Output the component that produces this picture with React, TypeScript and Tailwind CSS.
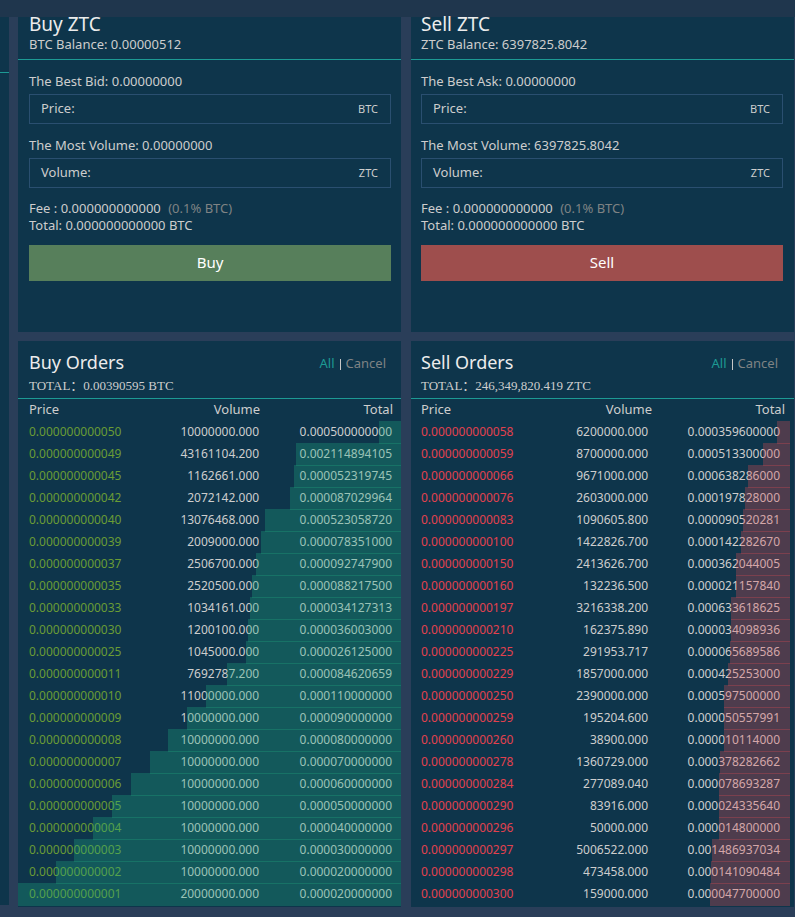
import React from "react";

type Row = [price: string, volume: string, total: string, depth: number];

const buyRows: Row[] = [
  ["0.000000000050", "10000000.000", "0.000500000000", 22],
  ["0.000000000049", "43161104.200", "0.002114894105", 105],
  ["0.000000000045", "1162661.000", "0.000052319745", 107],
  ["0.000000000042", "2072142.000", "0.000087029964", 111],
  ["0.000000000040", "13076468.000", "0.000523058720", 136],
  ["0.000000000039", "2009000.000", "0.000078351000", 140],
  ["0.000000000037", "2506700.000", "0.000092747900", 145],
  ["0.000000000035", "2520500.000", "0.000088217500", 149],
  ["0.000000000033", "1034161.000", "0.000034127313", 151],
  ["0.000000000030", "1200100.000", "0.000036003000", 153],
  ["0.000000000025", "1045000.000", "0.000026125000", 155],
  ["0.000000000011", "7692787.200", "0.000084620659", 174],
  ["0.000000000010", "11000000.000", "0.000110000000", 195],
  ["0.000000000009", "10000000.000", "0.000090000000", 214],
  ["0.000000000008", "10000000.000", "0.000080000000", 233],
  ["0.000000000007", "10000000.000", "0.000070000000", 251],
  ["0.000000000006", "10000000.000", "0.000060000000", 270],
  ["0.000000000005", "10000000.000", "0.000050000000", 289],
  ["0.000000000004", "10000000.000", "0.000040000000", 308],
  ["0.000000000003", "10000000.000", "0.000030000000", 327],
  ["0.000000000002", "10000000.000", "0.000020000000", 345],
  ["0.000000000001", "20000000.000", "0.000020000000", 383],
];

const sellRows: Row[] = [
  ["0.000000000058", "6200000.000", "0.000359600000", 13],
  ["0.000000000059", "8700000.000", "0.000513300000", 27],
  ["0.000000000066", "9671000.000", "0.000638286000", 42],
  ["0.000000000076", "2603000.000", "0.000197828000", 45],
  ["0.000000000083", "1090605.800", "0.000090520281", 47],
  ["0.000000000100", "1422826.700", "0.000142282670", 49],
  ["0.000000000150", "2413626.700", "0.000362044005", 54],
  ["0.000000000160", "132236.500", "0.000021157840", 54],
  ["0.000000000197", "3216338.200", "0.000633618625", 59],
  ["0.000000000210", "162375.890", "0.000034098936", 59],
  ["0.000000000225", "291953.717", "0.000065689586", 60],
  ["0.000000000229", "1857000.000", "0.000425253000", 62],
  ["0.000000000250", "2390000.000", "0.000597500000", 66],
  ["0.000000000259", "195204.600", "0.000050557991", 66],
  ["0.000000000260", "38900.000", "0.000010114000", 66],
  ["0.000000000278", "1360729.000", "0.000378282662", 70],
  ["0.000000000284", "277089.040", "0.000078693287", 71],
  ["0.000000000290", "83916.000", "0.000024335640", 71],
  ["0.000000000296", "50000.000", "0.000014800000", 71],
  ["0.000000000297", "5006522.000", "0.001486937034", 78],
  ["0.000000000298", "473458.000", "0.000141090484", 79],
  ["0.000000000300", "159000.000", "0.000047700000", 80],
];

// Depth values are expressed against this full-scale value.
const DEPTH_SCALE = 383;

function Field({ id, label, unit }: { id: string; label: string; unit: string }) {
  return (
    <div className="mt-[3px] flex h-[30px] items-center border border-[#2a4f70] pl-[11px] pr-3">
      <label htmlFor={id}>{label}</label>
      <input id={id} type="text" className="ml-2 min-w-0 flex-1 bg-transparent outline-none" />
      <span className="text-[11px]">{unit}</span>
    </div>
  );
}

type TradeProps = {
  side: "Buy" | "Sell";
  balance: string;
  best: string;
  most: string;
};

function TradePanel({ side, balance, best, most }: TradeProps) {
  const id = side.toLowerCase();
  const buy = side === "Buy";
  return (
    <section className="h-[315px] bg-[#0e354b]">
      <header className={"h-[43px] border-b border-[#1d9a94] " + (buy ? "px-[11px]" : "px-2.5")}>
        <h2 className="text-[19px] leading-[14px] text-[#ececec]">{side} ZTC</h2>
        <p className="mt-[3px] leading-5">{balance}</p>
      </header>
      <form
        className={"pt-[11px] " + (buy ? "pl-[11px] pr-2.5" : "pl-2.5 pr-[11px]")}
        onSubmit={(e) => e.preventDefault()}
      >
        <p className="leading-5">{best}</p>
        <Field id={id + "-price"} label="Price:" unit="BTC" />
        <p className="mt-[11px] leading-5">{most}</p>
        <Field id={id + "-volume"} label="Volume:" unit="ZTC" />
        <p className="mt-3 leading-[17px]">
          Fee : 0.000000000000 <span className="ml-1 text-[#7f8384]">(0.1% BTC)</span>
        </p>
        <p className="leading-[17px]">Total: 0.000000000000 BTC</p>
        <button
          type="submit"
          className={
            "mt-[11px] block h-9 w-full pb-0.5 text-[15px] text-white " +
            (buy ? "bg-[#577f5b]" : "bg-[#9e4e4d]")
          }
        >
          {side}
        </button>
      </form>
    </section>
  );
}

function OrdersPanel({ side, total, rows }: { side: "Buy" | "Sell"; total: string; rows: Row[] }) {
  const buy = side === "Buy";
  const padLeft = buy ? "pl-[11px]" : "pl-2.5";
  return (
    <section className="bg-[#0e354b] pb-0.5">
      <header
        className={
          "flex h-[58px] justify-between border-b border-[#1d9a94] pt-[11px] " +
          padLeft +
          (buy ? " pr-[15px]" : " pr-4")
        }
      >
        <div>
          <h2 className="text-[18px] leading-5 text-[#ececec]">{side} Orders</h2>
          <p className="mt-1 font-['Liberation_Serif','Noto_Sans_CJK_SC',serif] leading-5" lang="zh-CN">
            {total}
          </p>
        </div>
        <div className="flex h-6 items-center">
          <button type="button" className="text-[#1d9a94]">All</button>
          <span className="mx-[5px] h-[11px] w-px bg-[#c8c8c8]" />
          <button type="button" className="text-[#7f8384]">Cancel</button>
        </div>
      </header>
      <table className="w-full table-fixed border-collapse">
        <thead>
          <tr className="h-[22px] leading-5">
            <th className={"w-[30%] p-0 text-left align-top font-normal " + padLeft}>Price</th>
            <th className={"w-[34%] p-0 text-right align-top font-normal " + (buy ? "pr-[3px]" : "pr-1")}>
              Volume
            </th>
            <th className={"w-[36%] p-0 text-right align-top font-normal " + (buy ? "pr-2" : "pr-[9px]")}>
              Total
            </th>
          </tr>
        </thead>
        <tbody className="text-[12px] leading-[22px]">
          {rows.map(([price, volume, sum, depth]) => (
            <tr key={price} className="relative h-[22px]">
              <td className={"p-0 " + padLeft + (buy ? " text-[#6a9c35]" : " text-[#e2414e]")}>{price}</td>
              <td className={"p-0 text-right " + (buy ? "pr-1" : "pr-2")}>{volume}</td>
              <td className={"p-0 text-right " + (buy ? "pr-[9px]" : "pr-3.5")}>
                {sum}
                <span
                  className={
                    "absolute top-0 h-[23px] " +
                    (buy ? "right-0 bg-[#22ad80]/30" : "right-1 bg-[#e34c52]/30")
                  }
                  style={{ width: `${(depth / DEPTH_SCALE) * 100}%` }}
                />
              </td>
            </tr>
          ))}
        </tbody>
      </table>
    </section>
  );
}

export default function App() {
  return (
    <div className="min-h-screen bg-[#2a3e59] font-['Noto_Sans','Open_Sans',sans-serif] text-[13px] text-[#cdcdcd]">
      <div className="h-[17px] bg-[#1f364d]" />
      <main className="flex pb-2.5 pr-px">
        <aside className="mb-0.5 mr-[9px] w-[9px] shrink-0 bg-[#0e354b]">
          <div className="h-14 border-b border-[#1d9a94]" />
        </aside>
        <div className="grid flex-1 grid-cols-2 gap-x-2.5 gap-y-[9px]">
          <TradePanel
            side="Buy"
            balance="BTC Balance: 0.00000512"
            best="The Best Bid: 0.00000000"
            most="The Most Volume: 0.00000000"
          />
          <TradePanel
            side="Sell"
            balance="ZTC Balance: 6397825.8042"
            best="The Best Ask: 0.00000000"
            most="The Most Volume: 6397825.8042"
          />
          <OrdersPanel side="Buy" total="TOTAL：0.00390595 BTC" rows={buyRows} />
          <OrdersPanel side="Sell" total="TOTAL：246,349,820.419 ZTC" rows={sellRows} />
        </div>
      </main>
    </div>
  );
}
